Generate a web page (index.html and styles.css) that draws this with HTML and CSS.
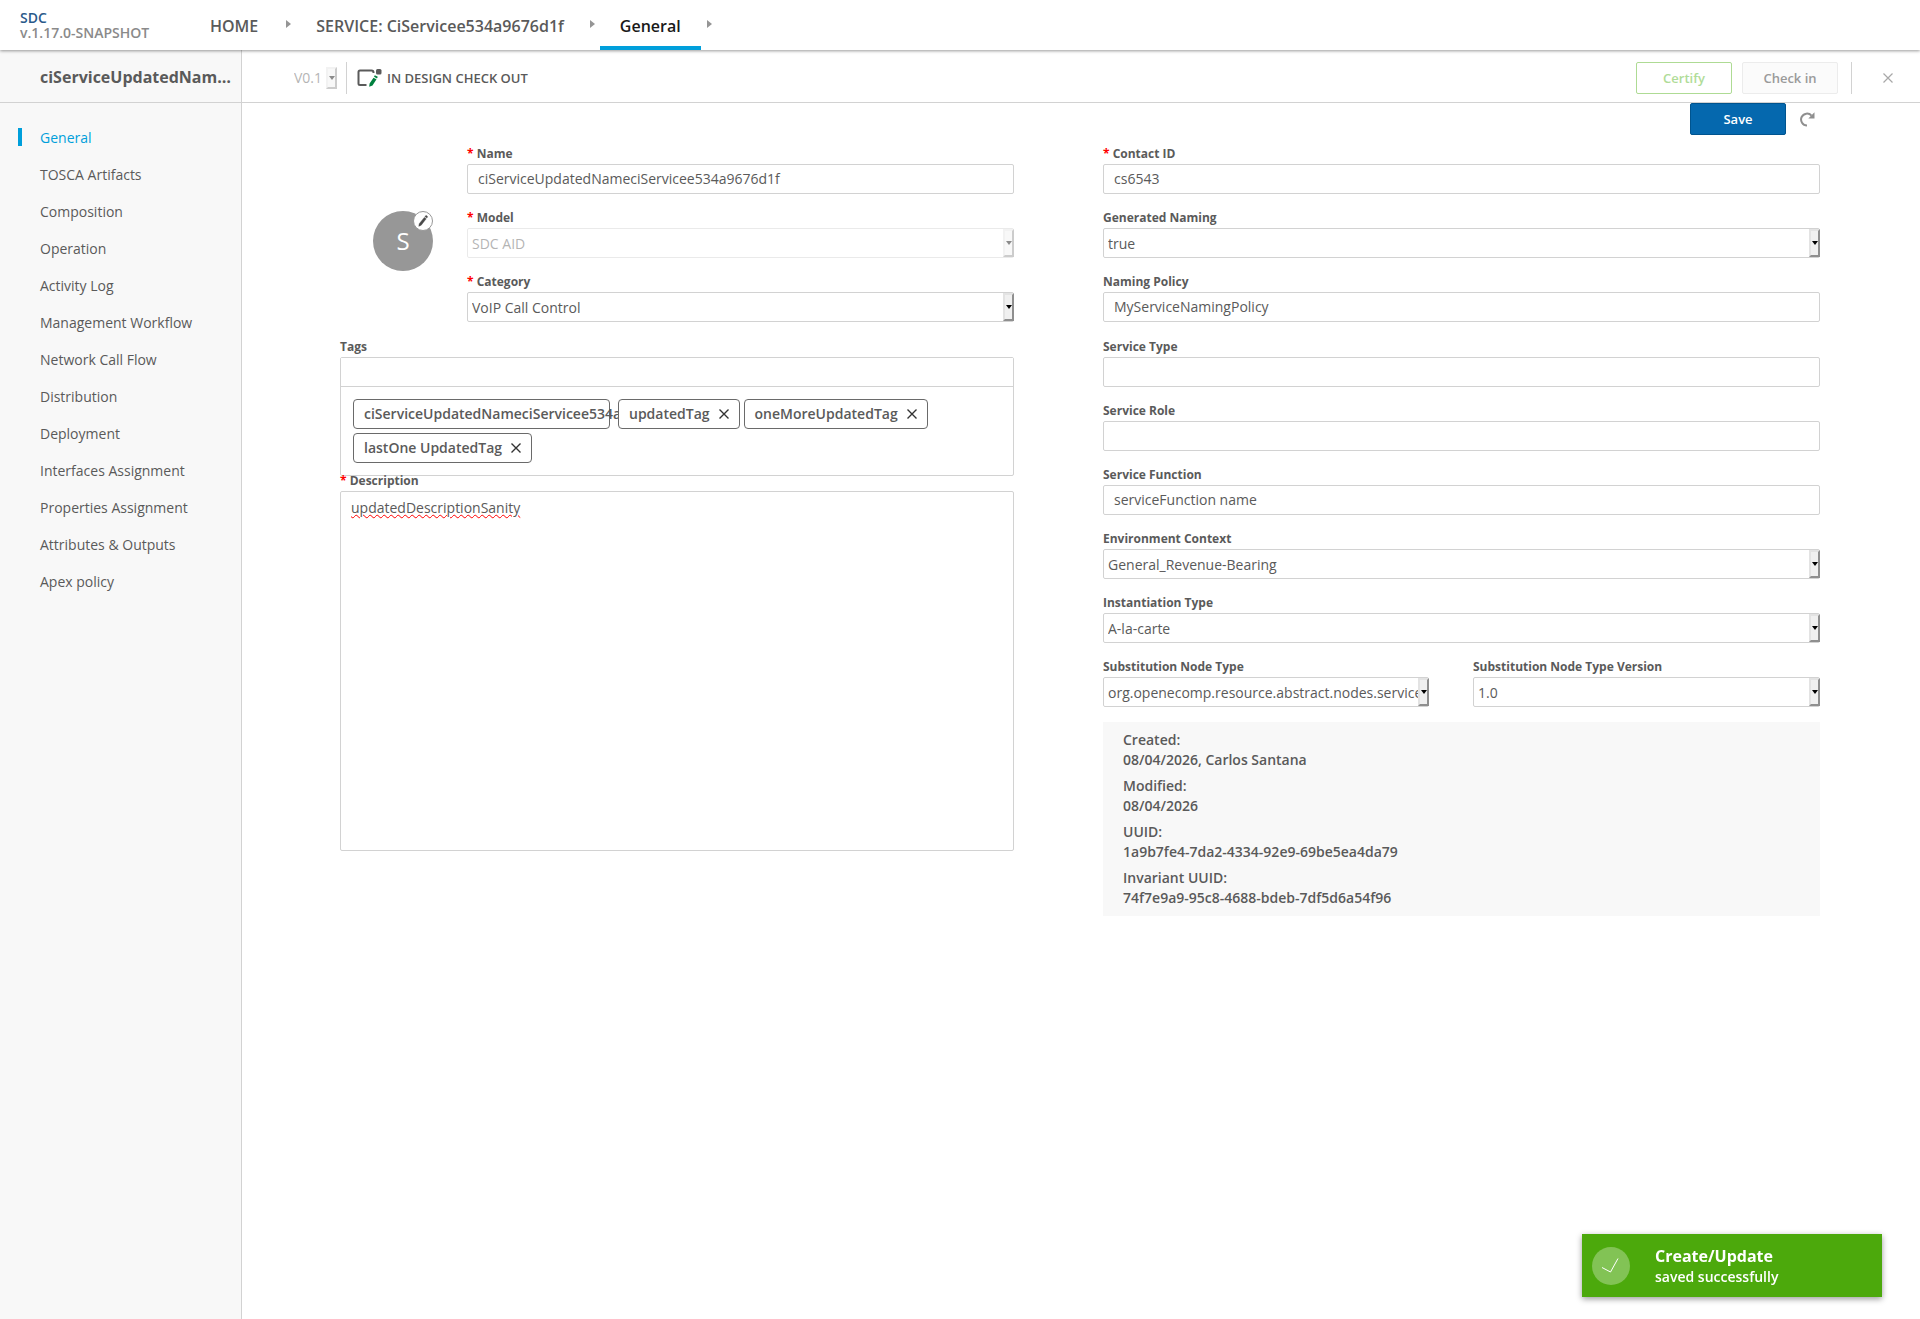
FILE: index.html
```html
<!DOCTYPE html>
<html lang="en">
<head>
<meta charset="utf-8">
<title>SDC - General</title>
<link rel="stylesheet" href="styles.css">
</head>
<body>
<header class="topbar">
  <div class="brand">
    <a class="brand-name" href="#">SDC</a>
    <span class="brand-version">v.1.17.0-SNAPSHOT</span>
  </div>
  <nav class="crumbs" aria-label="Breadcrumb">
    <a class="crumb" href="#">HOME</a>
    <span class="crumb-arrow"></span>
    <a class="crumb" href="#">SERVICE: CiServicee534a9676d1f</a>
    <span class="crumb-arrow"></span>
    <a class="crumb crumb-active" href="#">General</a>
    <span class="crumb-arrow"></span>
  </nav>
</header>
<div class="shell">
  <aside class="sidebar">
    <h1 class="sidebar-title">ciServiceUpdatedNameciServicee534a9676d1f</h1>
    <nav class="menu" aria-label="Service">
      <a class="menu-item menu-item-active" href="#">General</a>
      <a class="menu-item" href="#">TOSCA Artifacts</a>
      <a class="menu-item" href="#">Composition</a>
      <a class="menu-item" href="#">Operation</a>
      <a class="menu-item" href="#">Activity Log</a>
      <a class="menu-item" href="#">Management Workflow</a>
      <a class="menu-item" href="#">Network Call Flow</a>
      <a class="menu-item" href="#">Distribution</a>
      <a class="menu-item" href="#">Deployment</a>
      <a class="menu-item" href="#">Interfaces Assignment</a>
      <a class="menu-item" href="#">Properties Assignment</a>
      <a class="menu-item" href="#">Attributes &amp; Outputs</a>
      <a class="menu-item" href="#">Apex policy</a>
    </nav>
  </aside>
  <main class="content">
    <div class="toolbar">
      <div class="version select-box select-disabled">
        <select class="version-select" aria-label="Version" disabled><option>V0.1</option></select>
        <span class="select-arrow"></span>
      </div>
      <span class="divider"></span>
      <svg class="state-icon" width="25" height="18" viewBox="0 0 25 18" aria-hidden="true">
        <path d="M16.500 4V3.500Q16.500 1.500 14.500 1.500H3Q1.500 1.500 1.500 3V14.500Q1.500 16 3 16H9.500" fill="none" stroke="#5a5a5a" stroke-width="2"/>
        <rect x="19" y="0" width="5.500" height="5.500" rx="1.500" fill="#5a5a5a"/>
        <path d="M17.800 6.200L20.800 7.800L20 9.400L17 7.800Z M16.500 8.700L19.500 10.300L15.500 16.500L12.200 17.800L12.600 14.600Z" fill="#00803e"/>
      </svg>
      <span class="state">IN DESIGN CHECK OUT</span>
      <div class="toolbar-actions">
        <button class="btn btn-certify" type="button" disabled>Certify</button>
        <button class="btn btn-checkin" type="button" disabled>Check in</button>
        <span class="divider"></span>
        <button class="icon-btn close" type="button" aria-label="Close">
          <svg width="10" height="10" viewBox="0 0 10 10"><path d="M0.500 0.500L9.500 9.500M9.500 0.500L0.500 9.500" stroke="#a8a8a8" stroke-width="1.200"/></svg>
        </button>
      </div>
    </div>
    <div class="save-row">
      <button class="btn btn-save" type="button">Save</button>
      <button class="icon-btn" type="button" aria-label="Revert">
        <svg width="15" height="15" viewBox="0 0 15 15"><path d="M7 13.400A5.900 5.900 0 1 1 11.500 3.700" fill="none" stroke="#8f8f8f" stroke-width="2"/><path d="M14.500 0.300V6.400H8.300Z" fill="#8f8f8f"/></svg>
      </button>
    </div>
    <form class="form">
      <div class="column">
        <div class="identity">
          <div class="avatar">S
            <button class="avatar-edit" type="button" aria-label="Edit icon">
              <svg width="10" height="12" viewBox="0 0 10 12"><path d="M6.300 2.400L8.200 3.800L3.200 10.200L0.800 11.300L1.200 8.800Z M6.900 1.600L7.600 0.700Q8.300 0.300 9.100 0.900T9.400 2.200L8.800 3Z" fill="#4a4a4a" stroke="#4a4a4a" stroke-width="0.400"/></svg>
            </button>
          </div>
          <div class="group">
            <div class="field">
              <label class="label required" for="name">Name</label>
              <input class="input" id="name" type="text" value="ciServiceUpdatedNameciServicee534a9676d1f">
            </div>
            <div class="field">
              <label class="label required" for="model">Model</label>
              <div class="select-box select-disabled"><select class="input select" id="model" disabled><option>SDC AID</option></select><span class="select-arrow"></span></div>
            </div>
            <div class="field">
              <label class="label required" for="category">Category</label>
              <div class="select-box"><select class="input select" id="category"><option>VoIP Call Control</option></select><span class="select-arrow"></span></div>
            </div>
          </div>
        </div>
        <div class="tags-field">
          <label class="label" for="tags">Tags</label>
          <div class="tags">
            <input class="tags-input" id="tags" type="text">
            <div class="tag-list">
              <span class="tag tag-long">ciServiceUpdatedNameciServicee534a9676d1f</span>
              <span class="tag">updatedTag<button class="icon-btn" type="button" aria-label="Remove updatedTag"><svg width="10" height="10" viewBox="0 0 10 10"><path d="M0.500 0.500L9.500 9.500M9.500 0.500L0.500 9.500" stroke="#333" stroke-width="1.400"/></svg></button></span>
              <span class="tag">oneMoreUpdatedTag<button class="icon-btn" type="button" aria-label="Remove oneMoreUpdatedTag"><svg width="10" height="10" viewBox="0 0 10 10"><path d="M0.500 0.500L9.500 9.500M9.500 0.500L0.500 9.500" stroke="#333" stroke-width="1.400"/></svg></button></span>
              <span class="tag">lastOne UpdatedTag<button class="icon-btn" type="button" aria-label="Remove lastOne UpdatedTag"><svg width="10" height="10" viewBox="0 0 10 10"><path d="M0.500 0.500L9.500 9.500M9.500 0.500L0.500 9.500" stroke="#333" stroke-width="1.400"/></svg></button></span>
            </div>
          </div>
        </div>
        <div class="description-field">
          <label class="label required" for="description">Description</label>
          <textarea class="description" id="description" spellcheck="false">updatedDescriptionSanity</textarea>
        </div>
      </div>
      <div class="column">
        <div class="group">
          <div class="field">
            <label class="label required" for="contact">Contact ID</label>
            <input class="input" id="contact" type="text" value="cs6543">
          </div>
          <div class="field">
            <label class="label" for="generated">Generated Naming</label>
            <div class="select-box"><select class="input select" id="generated"><option>true</option></select><span class="select-arrow"></span></div>
          </div>
          <div class="field">
            <label class="label" for="policy">Naming Policy</label>
            <input class="input" id="policy" type="text" value="MyServiceNamingPolicy">
          </div>
        </div>
        <div class="group">
          <div class="field">
            <label class="label" for="stype">Service Type</label>
            <input class="input" id="stype" type="text">
          </div>
          <div class="field">
            <label class="label" for="srole">Service Role</label>
            <input class="input" id="srole" type="text">
          </div>
          <div class="field">
            <label class="label" for="sfunction">Service Function</label>
            <input class="input" id="sfunction" type="text" value="serviceFunction name">
          </div>
          <div class="field">
            <label class="label" for="environment">Environment Context</label>
            <div class="select-box"><select class="input select" id="environment"><option>General_Revenue-Bearing</option></select><span class="select-arrow"></span></div>
          </div>
          <div class="field">
            <label class="label" for="instantiation">Instantiation Type</label>
            <div class="select-box"><select class="input select" id="instantiation"><option>A-la-carte</option></select><span class="select-arrow"></span></div>
          </div>
          <div class="pair">
            <div class="field">
              <label class="label" for="node">Substitution Node Type</label>
              <div class="select-box"><select class="input select" id="node"><option>org.openecomp.resource.abstract.nodes.service</option></select><span class="select-arrow"></span></div>
            </div>
            <div class="field">
              <label class="label" for="nodever">Substitution Node Type Version</label>
              <div class="select-box"><select class="input select" id="nodever"><option>1.0</option></select><span class="select-arrow"></span></div>
            </div>
          </div>
        </div>
        <dl class="meta">
          <div><dt>Created:</dt><dd>08/04/2026, Carlos Santana</dd></div>
          <div><dt>Modified:</dt><dd>08/04/2026</dd></div>
          <div><dt>UUID:</dt><dd>1a9b7fe4-7da2-4334-92e9-69be5ea4da79</dd></div>
          <div><dt>Invariant UUID:</dt><dd>74f7e9a9-95c8-4688-bdeb-7df5d6a54f96</dd></div>
        </dl>
      </div>
    </form>
  </main>
</div>
<div class="toast" role="status">
  <svg class="toast-icon" width="38" height="38" viewBox="0 0 38 38" aria-hidden="true"><circle cx="19" cy="19" r="19" fill="#fff" fill-opacity="0.300"/><path d="M10 20.500L18.500 25L26 11.500" fill="none" stroke="#fff" stroke-width="1"/></svg>
  <div>
    <div class="toast-title">Create/Update</div>
    <div class="toast-text">saved successfully</div>
  </div>
</div>
</body>
</html>
```
FILE: styles.css
```css
* {
  box-sizing: border-box;
}

body {
  display: flex;
  flex-direction: column;
  min-height: 100vh;
  margin: 0;
  background: #fff;
  color: #5a5a5a;
  font: 14px/20px "Open Sans", sans-serif;
}

a {
  color: inherit;
  text-decoration: none;
}

button,
input,
select,
textarea {
  margin: 0;
  color: inherit;
  font: inherit;
}

/* Top bar */
.topbar {
  position: relative;
  display: flex;
  height: 50px;
  background: #fff;
  box-shadow: 0 1px 3px rgba(0, 0, 0, 0.4);
}

.brand {
  display: flex;
  flex-direction: column;
  width: 190px;
  padding: 10px 0 0 20px;
  font-weight: 600;
  line-height: 15px;
}

.brand-name {
  color: #2a5a8a;
}

.brand-version {
  color: #8a8a8a;
}

.crumbs {
  display: flex;
}

.crumb {
  display: flex;
  align-items: center;
  padding: 6px 20px 0;
  border-bottom: 4px solid transparent;
  font-size: 16px;
  font-weight: 600;
}

.crumb-active {
  border-bottom-color: #009fdb;
  color: #191919;
}

.crumb-arrow {
  width: 0;
  height: 0;
  margin: 20px 5px 0 6px;
  border: solid transparent;
  border-width: 4px 0 4px 5px;
  border-left-color: #959595;
}

.crumb-arrow:nth-child(2) {
  margin-left: 8px;
}

/* Side menu */
.shell {
  display: flex;
  flex: 1;
}

.sidebar {
  flex: none;
  width: 242px;
  border-right: 1px solid #d2d2d2;
  background: #f8f8f8;
}

.sidebar-title {
  height: 53px;
  margin: 0;
  padding: 0 8px 0 40px;
  overflow: hidden;
  border-bottom: 1px solid #d2d2d2;
  font-size: 16px;
  font-weight: 700;
  line-height: 54px;
  text-overflow: ellipsis;
  white-space: nowrap;
}

.menu {
  display: flex;
  flex-direction: column;
  gap: 19px;
  padding: 25px 0 0 18px;
}

.menu-item {
  height: 18px;
  padding-left: 18px;
  border-left: 4px solid transparent;
}

.menu-item-active {
  border-left-color: #009fdb;
  color: #009fdb;
}

/* Toolbar */
.content {
  flex: 1;
  min-width: 0;
}

.toolbar {
  display: flex;
  align-items: center;
  height: 53px;
  padding: 4px 27px 0 52px;
  border-bottom: 1px solid #d2d2d2;
}

.version {
  width: 43px;
  height: 22px;
}

.version-select {
  padding: 0;
  border: 0;
  background: none;
  appearance: none;
}

.divider {
  width: 1px;
  height: 32px;
  background: #d2d2d2;
}

.version + .divider {
  margin: 0 10px 0 9px;
}

.state {
  margin-left: 5px;
  font-size: 13px;
  font-weight: 600;
}

.toolbar-actions {
  display: flex;
  align-items: center;
  gap: 10px;
  margin-left: auto;
}

.toolbar-actions .divider {
  margin: 0 21px 0 3px;
}

.btn {
  width: 96px;
  height: 32px;
  padding: 0;
  border: 1px solid;
  border-radius: 2px;
  font-size: 13px;
  font-weight: 600;
}

.btn-certify {
  border-color: #aedb94;
  background: #fff;
  color: #b0dc98;
}

.btn-checkin {
  border-color: #ececec;
  background: #fbfbfb;
  color: #9a9a9a;
}

.btn-save {
  border-color: #00548f;
  background: #0568ae;
  color: #fff;
}

.icon-btn {
  display: flex;
  padding: 0;
  border: 0;
  background: none;
}

.save-row {
  display: flex;
  align-items: center;
  justify-content: flex-end;
  gap: 14px;
  padding-right: 105px;
}

/* Form */
.form {
  display: grid;
  grid-template-columns: minmax(0, 674fr) minmax(0, 717fr);
  gap: 89px;
  padding: 8px 100px 40px 98px;
}

.identity {
  display: flex;
  gap: 34px;
  padding-left: 33px;
}

.group {
  flex: 1;
  min-width: 0;
  padding-bottom: 1px;
}

.field {
  flex: 1;
  min-width: 0;
  padding-bottom: 13px;
}

.label {
  display: block;
  height: 21px;
  font-size: 12px;
  font-weight: 700;
  line-height: 22px;
}

.required::before {
  content: "* ";
  color: #f00;
}

.input {
  display: block;
  width: 100%;
  height: 30px;
  padding: 0 10px 1px;
  border: 1px solid #d2d2d2;
  border-radius: 2px;
  background: #fff;
}

.select {
  padding: 2px 9px 0 4px;
  appearance: none;
}

.select-box {
  display: grid;
}

.select-box > * {
  grid-area: 1 / 1;
}

.select-arrow {
  display: flex;
  align-items: center;
  justify-content: center;
  justify-self: end;
  width: 11px;
  border: 2px solid;
  border-color: #e3e3e3 #8f8f8f #8f8f8f #e3e3e3;
  background: #f0f0f0;
  pointer-events: none;
}

.select + .select-arrow {
  margin-top: 1px;
  margin-bottom: 1px;
}

.select-arrow::before {
  content: "";
  border: solid transparent;
  border-width: 4px 3px 0;
  border-top-color: #000;
}

.select-disabled {
  opacity: 0.45;
}

.select-disabled select {
  opacity: 1;
}

.avatar {
  position: relative;
  width: 60px;
  height: 60px;
  margin-top: 68px;
  border-radius: 50%;
  background: #979797;
  color: #fff;
  font-size: 24px;
  line-height: 60px;
  text-align: center;
}

.avatar-edit {
  position: absolute;
  top: 0;
  right: 0;
  display: flex;
  align-items: center;
  justify-content: center;
  width: 20px;
  height: 20px;
  padding: 0;
  border: 1px solid #979797;
  border-radius: 50%;
  background: #fff;
}

.tags {
  border: 1px solid #d2d2d2;
  border-radius: 2px;
}

.tags-input {
  display: block;
  width: 100%;
  height: 29px;
  padding: 0 10px;
  border: 0;
  border-bottom: 1px solid #d2d2d2;
}

.tag-list {
  display: flex;
  flex-wrap: wrap;
  gap: 4px;
  padding: 12px;
}

.tag {
  display: flex;
  align-items: center;
  gap: 9px;
  height: 30px;
  padding: 0 10px;
  border: 1px solid #6a6a6a;
  border-radius: 4px;
  background: #fff;
  font-weight: 600;
  white-space: nowrap;
}

.tag-long {
  width: 257px;
  margin-right: 4px;
}

.description-field .label {
  height: 15px;
  line-height: 10px;
}

.description {
  display: block;
  width: 100%;
  height: 360px;
  padding: 6px 10px;
  border: 1px solid #d2d2d2;
  border-radius: 2px;
  resize: none;
  text-decoration: underline wavy #f00 1px;
}

.pair {
  display: grid;
  grid-template-columns: minmax(0, 326fr) minmax(0, 347fr);
  gap: 44px;
}

.meta {
  display: flex;
  flex-direction: column;
  gap: 6px;
  margin: 1px 0 0;
  padding: 8px 20px;
  background: #f8f8f8;
  font-weight: 600;
}

.meta dd {
  margin: 0;
}

/* Notification */
.toast {
  position: fixed;
  right: 38px;
  bottom: 22px;
  display: flex;
  align-items: center;
  gap: 25px;
  width: 300px;
  height: 63px;
  padding: 0 10px;
  background: #4ca90c;
  box-shadow: 0 2px 6px rgba(0, 0, 0, 0.4);
  color: #fff;
  font-weight: 600;
}

.toast-title {
  font-size: 16px;
  font-weight: 700;
  line-height: 22px;
}
```
